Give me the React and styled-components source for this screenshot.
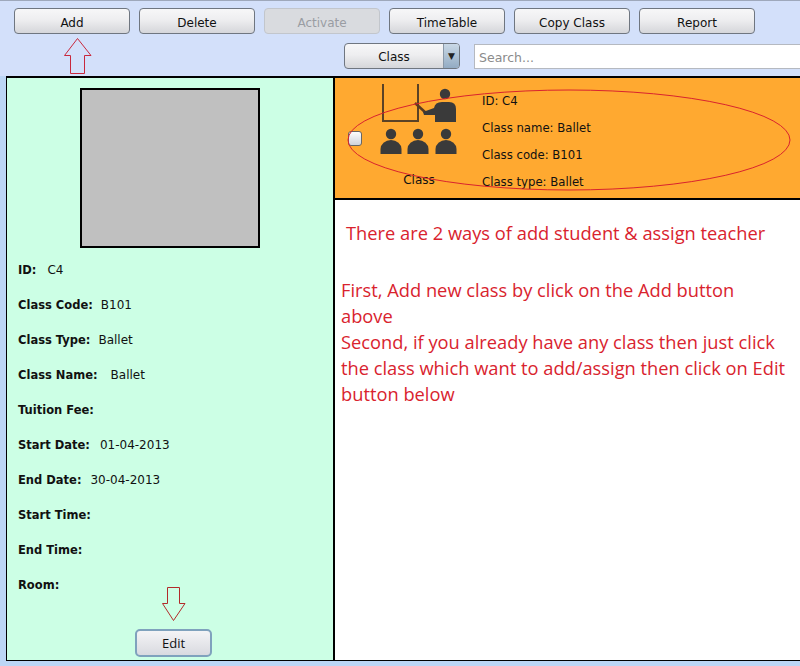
import React from 'react';
import styled, { createGlobalStyle } from 'styled-components';

const comic = '"Comic Sans MS", "DejaVu Sans", sans-serif';

const GlobalStyle = createGlobalStyle`
  html, body {
    margin: 0;
    padding: 0;
    background: #d3e0fa;
    overflow: hidden;
  }
  * { box-sizing: border-box; }
`;

const Page = styled.div`
  position: relative;
  width: 800px;
  height: 666px;
  display: flex;
  flex-direction: column;
  background: #d3e0fa;
  border-top: 1px solid #9ea8bb;
  font-family: ${comic};
  color: #111;
`;

const Toolbar = styled.div`
  height: 75px;
  padding: 7px 0 0 14px;
  display: flex;
  flex-direction: column;
  gap: 9px;
`;

const ButtonRow = styled.div`
  display: flex;
  gap: 9px;
`;

const Button = styled.div`
  width: 116px;
  height: 26px;
  padding-top: 3px;
  display: flex;
  align-items: center;
  justify-content: center;
  font-size: 12px;
  border-radius: 4px;
  border: 1px solid ${(p) => (p.$disabled ? '#c2c6cc' : '#6f7680')};
  color: ${(p) => (p.$disabled ? '#9a9da3' : '#111')};
  background: ${(p) =>
    p.$disabled
      ? '#d9dbdf'
      : 'linear-gradient(#f7f7f8 0%, #eeeef0 45%, #d5d6da 100%)'};
`;

const FilterRow = styled.div`
  display: flex;
  padding-left: 330px;
  gap: 14px;
  align-items: flex-start;
`;

const Select = styled.div`
  width: 116px;
  height: 26px;
  display: flex;
  border-radius: 4px;
  border: 1px solid #6f7680;
  overflow: hidden;
  font-size: 12px;
  background: linear-gradient(#f7f7f8 0%, #eeeef0 45%, #d5d6da 100%);
`;

const SelectLabel = styled.div`
  flex: 1;
  padding-top: 2px;
  display: flex;
  align-items: center;
  justify-content: center;
`;

const SelectArrow = styled.div`
  width: 16px;
  display: flex;
  align-items: center;
  justify-content: center;
  border-left: 1px solid #8a98a8;
  background: linear-gradient(#c9d8e6, #93abc3);
  font-size: 9px;
  color: #222;
`;

const SearchBox = styled.div`
  flex: 1;
  height: 25px;
  margin-top: 1px;
  padding: 1px 0 0 4px;
  display: flex;
  align-items: center;
  font-size: 12.5px;
  color: #8b8b8b;
  background: #fff;
  border: 1px solid #b5b9c0;
  border-right: none;
`;

const Body = styled.div`
  height: 585px;
  flex-shrink: 0;
  margin-left: 6px;
  display: flex;
  border-top: 2px solid #000;
  border-bottom: 1px solid #000;
  border-left: 1px solid #000;
  box-shadow: -6px 0 0 #bcd6f5;
`;

const Footer = styled.div`
  flex: 1;
  background: #bcd6f5;
`;

const LeftPanel = styled.div`
  width: 328px;
  background: #ccffe5;
  border-right: 2px solid #000;
  display: flex;
  flex-direction: column;
  padding-top: 10px;
`;

const Photo = styled.div`
  width: 180px;
  height: 160px;
  margin-left: 73px;
  background: #c0c0c0;
  border: 2px solid #000;
  flex-shrink: 0;
`;

const FieldList = styled.div`
  margin-top: 4px;
  padding-left: 11px;
  display: flex;
  flex-direction: column;
`;

const Field = styled.div`
  height: 35px;
  display: flex;
  align-items: center;
  font-size: 12px;
`;

const FieldLabel = styled.b`
  font-size: 11.5px;
  margin-right: ${(p) => p.$gap}px;
`;

const EditRow = styled.div`
  display: flex;
  padding-left: 128px;
  margin-top: 27px;
`;

const EditButton = styled.div`
  width: 77px;
  height: 28px;
  display: flex;
  align-items: center;
  justify-content: center;
  font-size: 13px;
  border-radius: 5px;
  border: 2px solid #7fa2bd;
  background: linear-gradient(#f4f4f6, #d9dae0);
  font-family: "Open Sans", sans-serif;
`;

const RightPanel = styled.div`
  flex: 1;
  display: flex;
  flex-direction: column;
  background: #fff;
`;

const ClassCard = styled.div`
  position: relative;
  height: 122px;
  flex-shrink: 0;
  background: #ffa930;
  border-bottom: 2px solid #000;
  display: flex;
  padding-left: 13px;
`;

const CheckBox = styled.div`
  width: 14px;
  height: 15px;
  margin-top: 53px;
  border-radius: 3px;
  border: 1px solid #666;
  background: linear-gradient(#fdfdfd, #cfd3db);
  flex-shrink: 0;
`;

const IconColumn = styled.div`
  width: 120px;
  padding: 5px 0 0 18px;
  display: flex;
  flex-direction: column;
  font-size: 12px;
  flex-shrink: 0;
`;

const IconLabel = styled.div`
  width: 78px;
  margin-top: 18px;
  text-align: center;
`;

const ClassInfo = styled.div`
  padding-top: 9px;
  display: flex;
  flex-direction: column;
  font-size: 11.7px;
`;

const InfoLine = styled.div`
  height: 27px;
  display: flex;
  align-items: center;
`;

const Ellipse = styled.svg`
  position: absolute;
  left: 11px;
  top: 10px;
  pointer-events: none;
`;

const Notes = styled.div`
  padding: 20px 0 0 6px;
  font-family: "Open Sans", sans-serif;
  font-size: 18.3px;
  line-height: 26px;
  white-space: nowrap;
  color: #d9232e;
`;

const NoteHeading = styled.div`
  padding-left: 5px;
  margin-bottom: 31px;
`;

const ArrowMark = styled.svg`
  position: absolute;
  left: ${(p) => p.$left}px;
  top: ${(p) => p.$top}px;
`;

function ClassIcon() {
  const person = (x) => (
    <g key={x} fill="#3a3a3a">
      <circle cx={x} cy="51" r="5.2" />
      <path d={`M${x - 10.5} 71 v-5 a10.5 9 0 0 1 21 0 v5 z`} />
    </g>
  );
  return (
    <svg width="78" height="72" viewBox="0 0 78 72">
      <path d="M3 1 V38 H38 V1" fill="none" stroke="#5a4226" strokeWidth="2" />
      <path d="M35 20 L46 30" fill="none" stroke="#5a3a20" strokeWidth="2.5" />
      <circle cx="65" cy="11" r="5.2" fill="#3a3a3a" />
      <path d="M43 29 L54 25 Q55 19 62 19 H69 Q76 19 76 26 V39 H55 V32 H44 Z" fill="#3a3a3a" />
      {[11, 38, 66].map(person)}
    </svg>
  );
}

const fields = [
  ['ID:', 'C4', 11],
  ['Class Code:', 'B101', 8],
  ['Class Type:', 'Ballet', 8],
  ['Class Name:', 'Ballet', 13],
  ['Tuition Fee:', '', 0],
  ['Start Date:', '01-04-2013', 10],
  ['End Date:', '30-04-2013', 9],
  ['Start Time:', '', 0],
  ['End Time:', '', 0],
  ['Room:', '', 0],
];

const buttons = ['Add', 'Delete', 'Activate', 'TimeTable', 'Copy Class', 'Report'];

const classLines = ['ID: C4', 'Class name: Ballet', 'Class code: B101', 'Class type: Ballet'];

export default function App() {
  return (
    <Page>
      <GlobalStyle />
      <Toolbar>
        <ButtonRow>
          {buttons.map((b) => (
            <Button key={b} $disabled={b === 'Activate'}>{b}</Button>
          ))}
        </ButtonRow>
        <FilterRow>
          <Select>
            <SelectLabel>Class</SelectLabel>
            <SelectArrow>▼</SelectArrow>
          </Select>
          <SearchBox>Search...</SearchBox>
        </FilterRow>
      </Toolbar>
      <Body>
        <LeftPanel>
          <Photo />
          <FieldList>
            {fields.map(([label, value, gap]) => (
              <Field key={label}>
                <FieldLabel $gap={gap}>{label}</FieldLabel>
                {value}
              </Field>
            ))}
          </FieldList>
          <EditRow>
            <EditButton>Edit</EditButton>
          </EditRow>
        </LeftPanel>
        <RightPanel>
          <ClassCard>
            <CheckBox />
            <IconColumn>
              <ClassIcon />
              <IconLabel>Class</IconLabel>
            </IconColumn>
            <ClassInfo>
              {classLines.map((l) => (
                <InfoLine key={l}>{l}</InfoLine>
              ))}
            </ClassInfo>
            <Ellipse width="446" height="104" viewBox="0 0 446 104">
              <ellipse cx="223" cy="52" rx="221" ry="50" fill="none" stroke="#d9232e" strokeWidth="1" />
            </Ellipse>
          </ClassCard>
          <Notes>
            <NoteHeading>There are 2 ways of add student &amp; assign teacher</NoteHeading>
            First, Add new class by click on the Add button
            <br />
            above
            <br />
            Second, if you already have any class then just click
            <br />
            the class which want to add/assign then click on Edit
            <br />
            button below
          </Notes>
        </RightPanel>
      </Body>
      <Footer />
      <ArrowMark $left={64} $top={37} width="28" height="36" viewBox="0 0 28 36">
        <path d="M0.5 17.5 L13.5 0.5 L27 17.5 H20.5 V35.5 H6.5 V17.5 Z" fill="none" stroke="#c8283c" strokeWidth="1" />
      </ArrowMark>
      <ArrowMark $left={162} $top={586} width="24" height="34" viewBox="0 0 24 34">
        <path d="M5.5 0.5 H17.5 V16.5 H23 L11.5 33.5 L0.5 16.5 H5.5 Z" fill="none" stroke="#b22a2a" strokeWidth="1" />
      </ArrowMark>
    </Page>
  );
}
